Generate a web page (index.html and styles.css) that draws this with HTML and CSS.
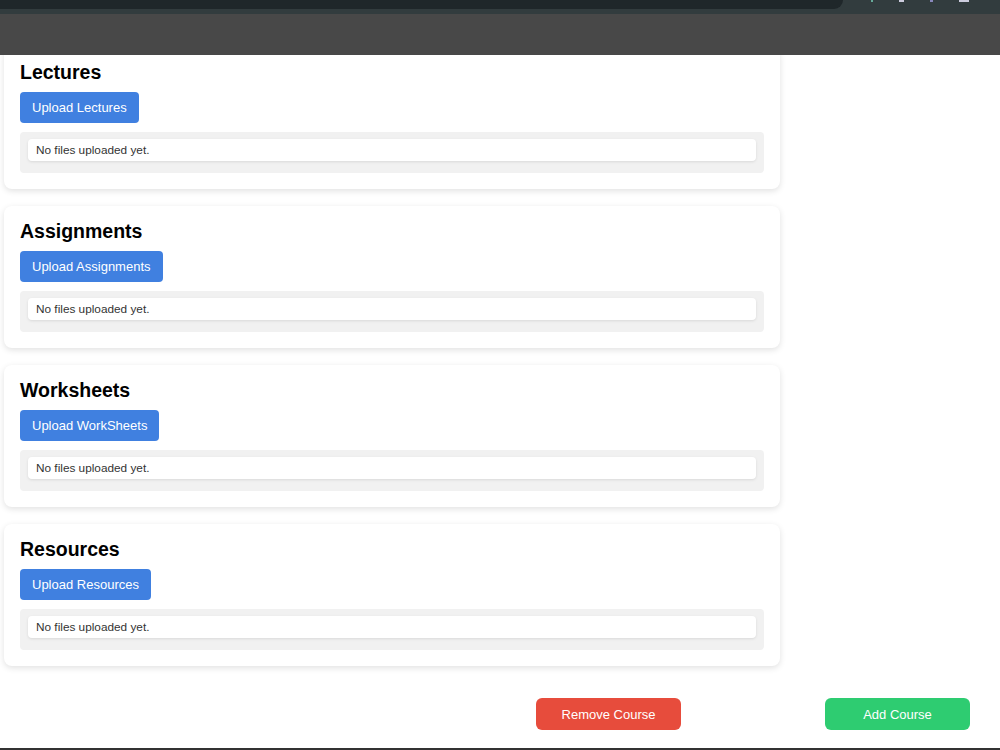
FILE: index.html
```html
<!DOCTYPE html>
<html lang="en">
<head>
  <meta charset="UTF-8">
  <title>Course Materials</title>
  <link rel="stylesheet" href="styles.css">
</head>
<body>
  <header class="topbar">
    <div class="chrome">
      <div class="tabstrip"></div>
      <div class="chrome-icons">
        <span class="dot green"></span>
        <span class="dot light"></span>
        <span class="dot blue"></span>
        <span class="dot wide"></span>
      </div>
    </div>
    <div class="toolbar"></div>
  </header>

  <main class="courses">
    <section class="card">
      <h2>Lectures</h2>
      <button class="upload">Upload Lectures</button>
      <ul class="file-list">
        <li>No files uploaded yet.</li>
      </ul>
    </section>

    <section class="card">
      <h2>Assignments</h2>
      <button class="upload">Upload Assignments</button>
      <ul class="file-list">
        <li>No files uploaded yet.</li>
      </ul>
    </section>

    <section class="card">
      <h2>Worksheets</h2>
      <button class="upload">Upload WorkSheets</button>
      <ul class="file-list">
        <li>No files uploaded yet.</li>
      </ul>
    </section>

    <section class="card">
      <h2>Resources</h2>
      <button class="upload">Upload Resources</button>
      <ul class="file-list">
        <li>No files uploaded yet.</li>
      </ul>
    </section>
  </main>

  <div class="actions">
    <button class="remove">Remove Course</button>
    <button class="add">Add Course</button>
  </div>

  <footer class="footer"></footer>
</body>
</html>
```

FILE: styles.css
```css
body {
  font-family: Arial, 'Liberation Sans', sans-serif;
  background: #fff;
  color: #000;
  margin: 0;
}
.topbar {
  position: fixed;
  top: 0;
  left: 0;
  right: 0;
  z-index: 10;
}
.chrome {
  display: flex;
  height: 14px;
  background: #323c3e;
}
.tabstrip {
  width: 843px;
  height: 9px;
  background: #1f272a;
  border-bottom-right-radius: 10px;
}
.chrome-icons {
  display: flex;
  align-items: flex-start;
  gap: 26px;
  padding-left: 28px;
}
.dot {
  width: 3px;
  height: 2px;
  background: #9aa;
}
.dot.green { background: #6a9; width: 2px; }
.dot.light { background: #ccd; width: 5px; }
.dot.blue { background: #88b; width: 3px; }
.dot.wide { background: #ccd; width: 10px; }
.toolbar {
  height: 41px;
  background: #484848;
}
.courses {
  display: flex;
  flex-direction: column;
  gap: 17px;
  width: 776px;
  margin: 0 0 0 4px;
  padding-top: 47px;
}
.card {
  background: #fff;
  border-radius: 8px;
  box-shadow: 0 2px 6px rgba(0, 0, 0, 0.12);
  padding: 14px 16px 16px;
}
.card h2 {
  font-size: 19.5px;
  margin: 0 0 9px;
  line-height: 22px;
}
.upload {
  font-family: inherit;
  font-size: 13px;
  color: #fff;
  background: #4080e0;
  border: none;
  border-radius: 4px;
  padding: 0 12px;
  height: 31px;
  cursor: pointer;
}
.file-list {
  list-style: none;
  margin: 9px 0 0;
  padding: 7px 8px 7px;
  background: #f1f1f1;
  border-radius: 4px;
}
.file-list li {
  background: #fff;
  border-radius: 4px;
  box-shadow: 0 1px 3px rgba(0, 0, 0, 0.1);
  padding: 0 8px;
  margin-bottom: 5px;
  height: 22px;
  line-height: 22px;
  font-size: 11.8px;
  color: #333;
}
.actions {
  display: flex;
  justify-content: flex-end;
  gap: 144px;
  padding: 0 30px;
  margin-top: 32px;
}
.actions button {
  font-family: inherit;
  font-size: 13px;
  color: #fff;
  border: none;
  border-radius: 6px;
  width: 145px;
  height: 32px;
  cursor: pointer;
}
.remove {
  background: #e74c3c;
}
.add {
  background: #2ecc71;
}
.footer {
  margin-top: 18px;
  border-top: 2px solid #333;
}
```
